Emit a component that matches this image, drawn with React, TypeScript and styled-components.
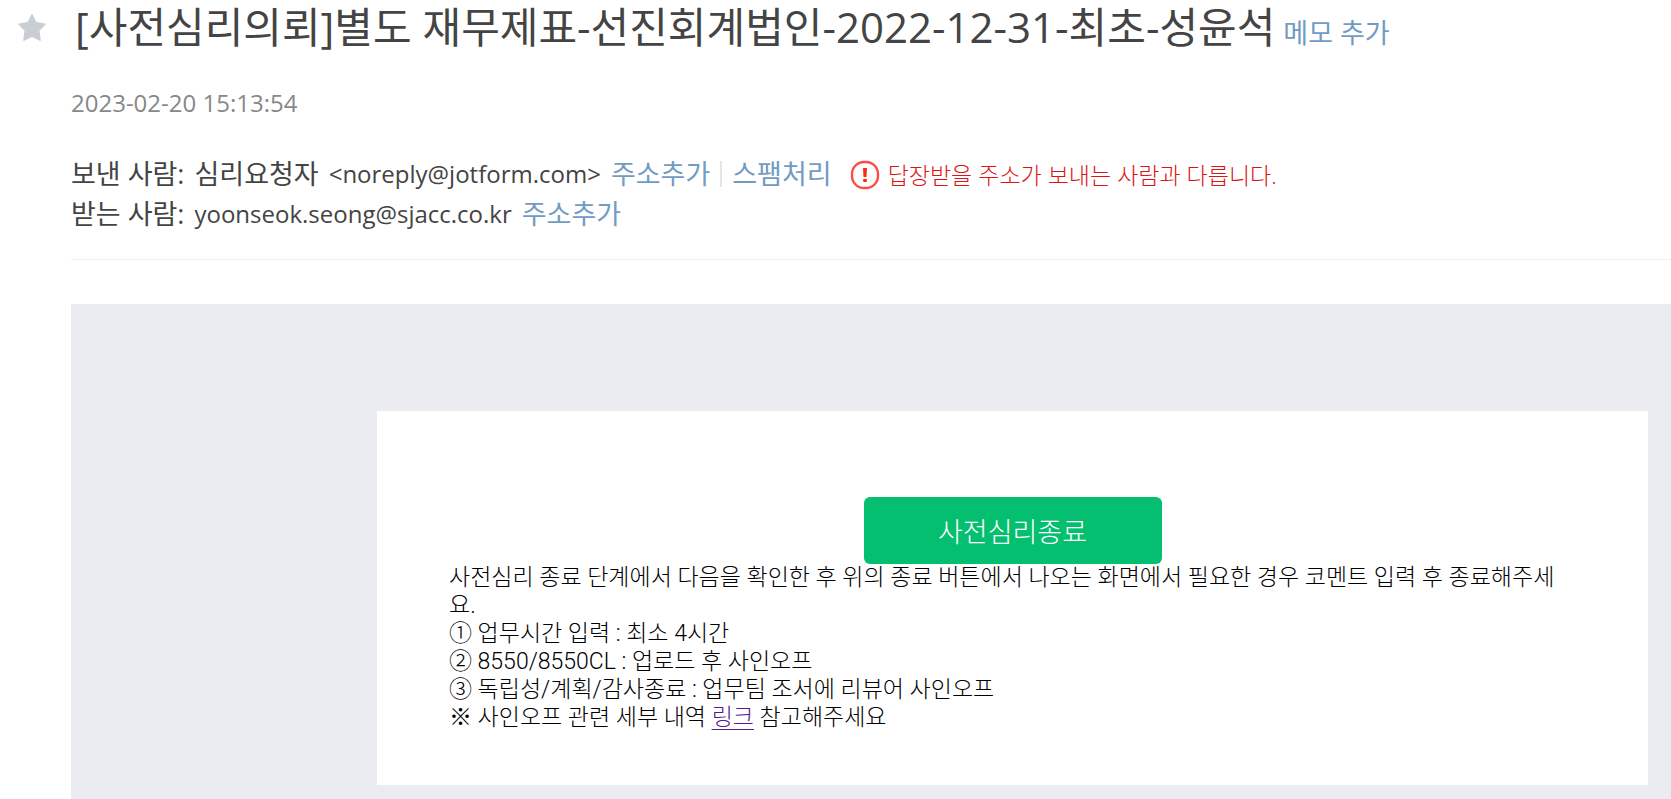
import React from "react";
import styled, { createGlobalStyle } from "styled-components";

const GlobalStyle = createGlobalStyle`
  *, *::before, *::after { box-sizing: border-box; }
  body {
    margin: 0;
    background: #fff;
    color: #444;
    font-family: "Open Sans", "Noto Sans CJK KR", sans-serif;
    word-break: break-all;
  }
`;

const Page = styled.main`
  display: grid;
  grid-template-columns: 71px minmax(0, 1fr);
  min-height: 100vh;
`;

const StarButton = styled.button`
  justify-self: start;
  align-self: start;
  margin: 13px 0 0 17px;
  padding: 0;
  border: 0;
  background: none;
  line-height: 0;
  cursor: pointer;
`;

const Mail = styled.article`
  display: flex;
  flex-direction: column;
  min-width: 0;
`;

const TitleRow = styled.div`
  display: flex;
  align-items: baseline;
  gap: 8px;
  height: 56px;
  padding-left: 4px;
`;

const Title = styled.h1`
  margin: 0;
  font-size: 42px;
  font-weight: 400;
  line-height: 54px;
  white-space: nowrap;
`;

const LinkButton = styled.button`
  padding: 0;
  border: 0;
  background: none;
  color: #729bc2;
  font: inherit;
  font-size: 27px;
  line-height: 40px;
  white-space: nowrap;
  cursor: pointer;
`;

const SentAt = styled.time`
  display: block;
  margin-top: 27px;
  color: #888;
  font-size: 24px;
  line-height: 40px;
`;

const People = styled.div`
  margin-top: 31px;
  padding-bottom: 25px;
  border-bottom: 1px solid #eee;
`;

const Person = styled.div`
  display: flex;
  align-items: center;
  gap: 10px;
  height: 40px;
  font-size: 27px;
  line-height: 40px;
  white-space: nowrap;
`;

const Address = styled.span`
  font-size: 24px;
`;

const Divider = styled.span`
  width: 2px;
  height: 26px;
  background: #e5e5e5;
`;

const Warning = styled.span`
  display: flex;
  align-items: center;
  gap: 8px;
  margin-left: 8px;
  padding-top: 2px;
  color: #dc1414;
  font-size: 23px;
  font-weight: 300;
`;

const Body = styled.section`
  flex: 1;
  margin-top: 44px;
  padding: 107px 23px 14px 306px;
  background: #ebecf1;
`;

const Card = styled.div`
  padding: 86px 72px 53px;
  background: #fff;
  color: #000;
  font-family: Roboto, "Noto Sans CJK KR", sans-serif;
  font-size: 23px;
  font-weight: 300;
  line-height: 28px;
`;

const FinishButton = styled.button`
  display: block;
  width: 298px;
  height: 67px;
  margin: 0 auto;
  padding: 4px 0 0;
  border: 0;
  border-radius: 6px;
  background: #04bf70;
  color: #fff;
  font: inherit;
  font-size: 27px;
  cursor: pointer;
`;

const Line = styled.p`
  margin: 0;
`;

const GuideLink = styled.a`
  color: #551a8b;
  text-decoration-thickness: 1px;
  text-underline-offset: 4px;
`;

export default function App() {
  return (
    <>
      <GlobalStyle />
      <Page>
        <StarButton type="button" aria-label="중요 표시">
          <svg width="30" height="29" viewBox="0 0 30 29">
            <path
              d="M15 1.5 L19.2 9.6 L28.5 11.1 L22 17.7 L23.3 27.5 L15 23.6 L6.7 27.5 L8 17.7 L1.5 11.1 L10.8 9.6 Z"
              fill="#c9cdd4"
              stroke="#c9cdd4"
              strokeLinejoin="round"
            />
          </svg>
        </StarButton>
        <Mail>
          <TitleRow>
            <Title>[사전심리의뢰]별도 재무제표-선진회계법인-2022-12-31-최초-성윤석</Title>
            <LinkButton type="button">메모 추가</LinkButton>
          </TitleRow>
          <SentAt dateTime="2023-02-20T15:13:54">2023-02-20 15:13:54</SentAt>
          <People>
            <Person>
              <span>보낸 사람:</span>
              <span>심리요청자</span>
              <Address>&lt;noreply@jotform.com&gt;</Address>
              <LinkButton type="button">주소추가</LinkButton>
              <Divider />
              <LinkButton type="button">스팸처리</LinkButton>
              <Warning>
                <svg width="30" height="30" viewBox="0 0 30 30" fill="none" aria-hidden="true">
                  <rect x="2" y="2" width="26" height="26" rx="12" stroke="#ff4a47" strokeWidth="2.4" />
                  <path d="M13 8 H17 L16.5 17 H13.5 Z" fill="#ff2a12" />
                  <rect x="13.2" y="19" width="3.6" height="3" fill="#ff2a12" />
                </svg>
                답장받을 주소가 보내는 사람과 다릅니다.
              </Warning>
            </Person>
            <Person>
              <span>받는 사람:</span>
              <Address>yoonseok.seong@sjacc.co.kr</Address>
              <LinkButton type="button">주소추가</LinkButton>
            </Person>
          </People>
          <Body>
            <Card>
              <FinishButton type="button">사전심리종료</FinishButton>
              <Line>
                사전심리 종료 단계에서 다음을 확인한 후 위의 종료 버튼에서 나오는 화면에서 필요한 경우 코멘트 입력 후 종료해주세요.
              </Line>
              <Line>① 업무시간 입력 : 최소 4시간</Line>
              <Line>② 8550/8550CL : 업로드 후 사인오프</Line>
              <Line>③ 독립성/계획/감사종료 : 업무팀 조서에 리뷰어 사인오프</Line>
              <Line>
                ※ 사인오프 관련 세부 내역 <GuideLink href="#guide">링크</GuideLink> 참고해주세요
              </Line>
            </Card>
          </Body>
        </Mail>
      </Page>
    </>
  );
}
